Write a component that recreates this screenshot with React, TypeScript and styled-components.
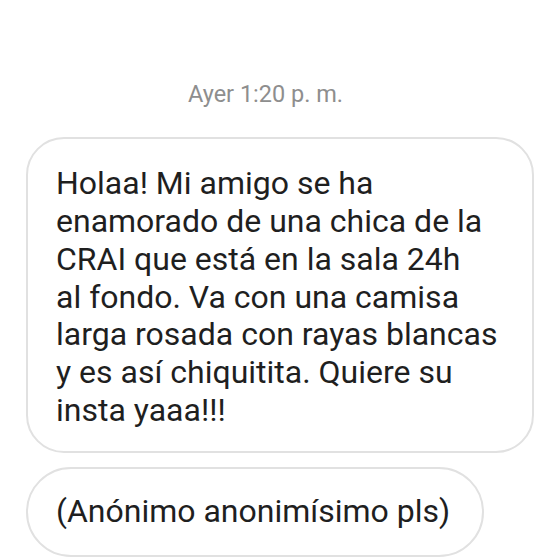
import React from "react";
import styled, { createGlobalStyle } from "styled-components";

const Global = createGlobalStyle`
  html, body { margin: 0; padding: 0; background: #ffffff; }
  body { font-family: Roboto, "Noto Sans", Arial, sans-serif; }
`;

const Thread = styled.div`
  width: 560px;
  height: 560px;
  overflow: hidden;
  display: flex;
  flex-direction: column;
  align-items: flex-start;
  padding: 79.7px 0 0 26px;
  box-sizing: border-box;
`;

const Timestamp = styled.div`
  align-self: stretch;
  margin: 0 29px 29.3px -26px;
  text-align: center;
  color: #8e8e8e;
  font-size: 23.5px;
  line-height: 28px;
`;

const Bubble = styled.div<{ $pill?: boolean }>`
  box-sizing: border-box;
  border: 2px solid #e1e1e1;
  border-radius: ${(p) => (p.$pill ? "46px" : "38px")};
  padding: ${(p) => (p.$pill ? "24.1px 32px 24.1px 28px" : "26.15px 30px 21.35px 28px")};
  color: #1f1f1f;
  font-size: 32px;
  line-height: 37.8px;
  margin-bottom: 14px;
  width: ${(p) => (p.$pill ? "auto" : "508px")};
`;

const Line = styled.span`
  display: block;
  white-space: nowrap;
`;

const lines = [
  "Holaa! Mi amigo se ha",
  "enamorado de una chica de la",
  "CRAI que está en la sala 24h",
  "al fondo. Va con una camisa",
  "larga rosada con rayas blancas",
  "y es así chiquitita. Quiere su",
  "insta yaaa!!!",
];

export default function App() {
  return (
    <>
      <Global />
      <Thread>
        <Timestamp>Ayer 1:20 p. m.</Timestamp>
        <Bubble>
          {lines.map((l) => (
            <Line key={l}>{l}</Line>
          ))}
        </Bubble>
        <Bubble $pill>(Anónimo anonimísimo pls)</Bubble>
      </Thread>
    </>
  );
}
